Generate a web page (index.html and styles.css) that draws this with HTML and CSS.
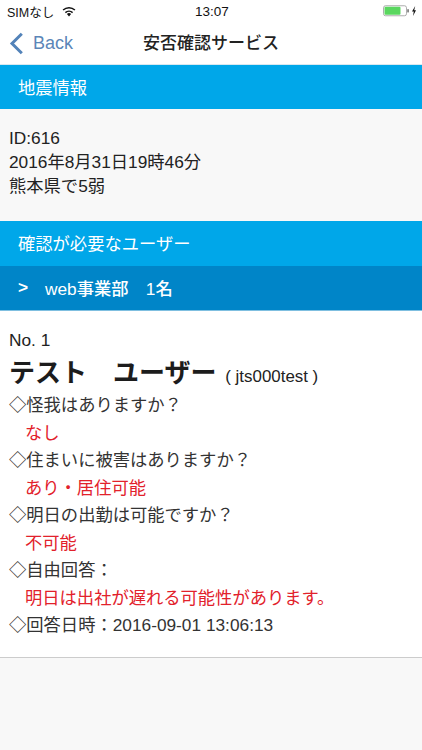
FILE: index.html
```html
<!DOCTYPE html>
<html lang="ja">
<head>
<meta charset="utf-8">
<title>安否確認サービス</title>
<link rel="stylesheet" href="styles.css">
</head>
<body>
<div class="status">
  <div class="status-left">
    <span>SIMなし</span>
    <svg class="wifi" width="14" height="11" viewBox="0 0 14 11"><path d="M7 10.5 4.9 8.1a3 3 0 0 1 4.2 0Z" fill="#111"/><path d="M3.4 6.6a5.2 5.2 0 0 1 7.2 0" fill="none" stroke="#111" stroke-width="1.5"/><path d="M1.1 4a8.6 8.6 0 0 1 11.8 0" fill="none" stroke="#111" stroke-width="1.5"/></svg>
  </div>
  <div class="status-time">13:07</div>
  <div class="status-right">
    <svg width="34" height="12" viewBox="0 0 34 12"><rect x=".5" y=".75" width="23" height="10" rx="2" fill="#fff" stroke="#999" stroke-width=".8"/><rect x="1.5" y="1.75" width="16" height="8" rx="1" fill="#5ad75f"/><rect x="24.4" y="4.2" width="1.3" height="3.2" fill="#555"/><path d="M32.2 1 29 6.6h1.8L30 11l3-5.7h-1.8Z" fill="#111"/></svg>
  </div>
</div>
<header class="nav">
  <div class="back">
    <svg width="15" height="23" viewBox="0 0 15 23"><path d="M12.8 1.8 3 11.5l9.8 9.7" fill="none" stroke="#5383b9" stroke-width="3"/></svg>
    <span>Back</span>
  </div>
  <h1 class="nav-title">安否確認サービス</h1>
</header>
<h2 class="band band-light band-first">地震情報</h2>
<section class="info">
  <p>ID:616</p>
  <p>2016年8月31日19時46分</p>
  <p>熊本県で5弱</p>
</section>
<h2 class="band band-light">確認が必要なユーザー</h2>
<h2 class="band band-dark"><span class="chev">&gt;</span><span>web事業部　1名</span></h2>
<section class="card">
  <p class="no">No. 1</p>
  <p class="name"><strong>テスト　ユーザー</strong> <small>( jts000test )</small></p>
  <p class="q">◇怪我はありますか？</p>
  <p class="a">なし</p>
  <p class="q">◇住まいに被害はありますか？</p>
  <p class="a">あり・居住可能</p>
  <p class="q">◇明日の出勤は可能ですか？</p>
  <p class="a">不可能</p>
  <p class="q">◇自由回答：</p>
  <p class="a">明日は出社が遅れる可能性があります。</p>
  <p class="q">◇回答日時：2016-09-01 13:06:13</p>
</section>
</body>
</html>
```
FILE: styles.css
```css
* { box-sizing: border-box; margin: 0; padding: 0; }
html, body { height: 100%; }
body {
  width: 422px;
  height: 750px;
  overflow: hidden;
  background: #f8f8f8;
  color: #222;
  font-family: "Liberation Sans", "Noto Sans CJK JP", sans-serif;
}
.status {
  height: 22px;
  background: #fff;
  display: grid;
  grid-template-columns: 1fr auto 1fr;
  align-items: center;
  padding: 0 5px 0 7px;
  font-size: 12.5px;
  color: #111;
}
.status-left { display: flex; align-items: center; gap: 8px; }
.status-time { font-size: 13.5px; font-weight: 500; }
.status-right { display: flex; justify-content: flex-end; }
.nav {
  height: 43px;
  background: #fff;
  position: relative;
  display: flex;
  align-items: center;
  justify-content: center;
  padding-bottom: 3px;
  border-bottom: 1px solid #d8e8f0;
}
.back {
  position: absolute;
  left: 9px;
  top: 9px;
  display: flex;
  align-items: center;
  gap: 9px;
  color: #5b86b8;
  font-size: 18px;
  line-height: 25px;
}
.nav-title { font-size: 17px; font-weight: 500; color: #222; }
.band {
  height: 45px;
  display: flex;
  align-items: center;
  padding: 0 0 2px 18px;
  color: #fff;
  font-size: 17.3px;
  font-weight: 400;
}
.band-light { background: #00a7e9; }
.band-first { height: 44px; }
.band-dark { background: #0085c8; font-weight: 500; border-bottom: 1px solid #7fbfe0; }
.chev { width: 27px; font-weight: 700; }
.info {
  height: 112px;
  padding: 17px 0 0 9px;
  background: #f8f8f8;
  font-size: 17.3px;
  line-height: 24.2px;
}
.card {
  height: 347px;
  padding: 17px 9px 0;
  background: #fff;
  border-bottom: 1px solid #ccc;
  font-size: 17.3px;
}
.no { line-height: 24px; }
.name { line-height: 42px; height: 40px; white-space: nowrap; }
.name strong { font-size: 26px; font-weight: 700; color: #1c1c1c; }
.name small { font-size: 16.9px; margin-left: 4px; }
.q { line-height: 27.5px; color: #333; }
.a { line-height: 27.5px; color: #e2212b; padding-left: 16px; }
```
